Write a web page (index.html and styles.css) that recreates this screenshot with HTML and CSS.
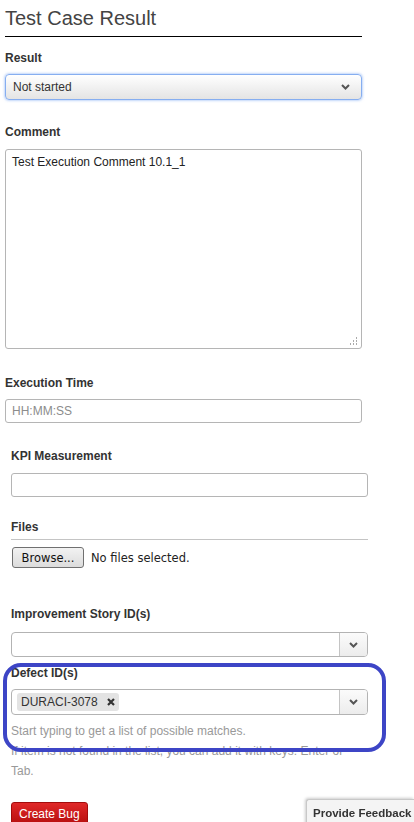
FILE: index.html
```html
<!DOCTYPE html>
<html lang="en">
<head>
<meta charset="utf-8">
<title>Test Case Result</title>
<link rel="stylesheet" href="styles.css">
</head>
<body>
<div class="panel">
  <h2 class="title">Test Case Result</h2>

  <div class="field field-result">
    <label class="label">Result</label>
    <div class="select">
      <span>Not started</span>
      <svg class="chev" width="9" height="6" viewBox="0 0 9 6"><path d="M1 1l3.5 3.5L8 1" fill="none" stroke="#555" stroke-width="2"/></svg>
    </div>
  </div>

  <div class="field field-comment">
    <label class="label">Comment</label>
    <div class="textarea">
      Test Execution Comment 10.1_1
      <svg class="grip" width="8" height="8" viewBox="0 0 8 8"><g fill="#aaa"><rect x="6" y="0" width="1" height="2"/><rect x="3" y="3" width="1" height="2"/><rect x="6" y="3" width="1" height="2"/><rect x="0" y="6" width="1" height="2"/><rect x="3" y="6" width="1" height="2"/><rect x="6" y="6" width="1" height="2"/></g></svg>
    </div>
  </div>

  <div class="field field-time">
    <label class="label">Execution Time</label>
    <div class="input placeholder">HH:MM:SS</div>
  </div>

  <div class="inner">
    <div class="field field-kpi">
      <label class="label">KPI Measurement</label>
      <div class="input"></div>
    </div>

    <div class="field field-files">
      <div class="label files-label">Files</div>
      <div class="file-row">
        <span class="browse">Browse...</span>
        <span class="file-status">No files selected.</span>
      </div>
    </div>

    <div class="field field-story">
      <label class="label">Improvement Story ID(s)</label>
      <div class="multi">
        <div class="multi-values"></div>
        <div class="multi-arrow"><svg width="9" height="6" viewBox="0 0 9 6"><path d="M1 1l3.5 3.5L8 1" fill="none" stroke="#555" stroke-width="2"/></svg></div>
      </div>
    </div>

    <div class="field field-defect">
      <div class="highlight"></div>
      <label class="label">Defect ID(s)</label>
      <div class="multi">
        <div class="multi-values">
          <span class="tag">DURACI-3078 <svg class="tag-x" width="8" height="8" viewBox="0 0 8 8"><path d="M1 1l6 6M7 1l-6 6" stroke="#333" stroke-width="2.2"/></svg></span>
        </div>
        <div class="multi-arrow"><svg width="9" height="6" viewBox="0 0 9 6"><path d="M1 1l3.5 3.5L8 1" fill="none" stroke="#555" stroke-width="2"/></svg></div>
      </div>
      <p class="help">Start typing to get a list of possible matches.<br>If item is not found in the list, you can add it with keys: Enter or Tab.</p>
    </div>

    <div class="actions">
      <span class="btn-bug">Create Bug</span>
    </div>
  </div>
</div>

<div class="feedback">Provide Feedback</div>
</body>
</html>
```

FILE: styles.css
```css
* { box-sizing: border-box; }

body {
  margin: 0;
  font-family: "Liberation Sans", Arial, sans-serif;
  font-size: 12px;
  color: #333;
  background: #fff;
}

.panel {
  padding-left: 5px;
  width: 362px;
}

.title {
  margin: 7px 0 0;
  font-size: 20px;
  line-height: 23px;
  font-weight: normal;
  color: #444;
  padding-bottom: 6px;
  border-bottom: 1px solid #000;
}

.label {
  display: block;
  font-weight: bold;
  line-height: 16px;
  margin-bottom: 9px;
  color: #333;
}

.field-result { margin-top: 13px; }
.field-result .label { margin-bottom: 8px; }

.select {
  height: 26px;
  border: 1px solid #86aef0;
  border-radius: 4px;
  box-shadow: 0 0 3px rgba(90, 145, 240, 0.75);
  background: linear-gradient(#ffffff, #e4e4e4);
  display: flex;
  align-items: center;
  justify-content: space-between;
  padding: 0 11px 0 7px;
  color: #333;
}

.chev { display: block; }

.field-comment { margin-top: 24px; }

.textarea {
  position: relative;
  height: 200px;
  border: 1px solid #b5b5b5;
  border-radius: 3px;
  padding: 5px 6px;
  color: #222;
  line-height: 14px;
}

.grip {
  position: absolute;
  right: 3px;
  bottom: 3px;
}

.field-time { margin-top: 26px; }
.field-time .label { margin-bottom: 8px; }

.input {
  height: 24px;
  border: 1px solid #b5b5b5;
  border-radius: 3px;
  padding: 0 6px;
  display: flex;
  align-items: center;
}

.placeholder { color: #8c8c8c; }

.inner {
  margin-left: 6px;
  width: 357px;
}

.field-kpi { margin-top: 25px; }

.field-files { margin-top: 22px; }

.files-label {
  padding-bottom: 4px;
  border-bottom: 1px solid #c4c4c4;
  margin-bottom: 7px;
}

.file-row {
  display: flex;
  align-items: center;
  gap: 7px;
  padding-left: 1px;
  font-family: "DejaVu Sans", Tahoma, sans-serif;
  font-size: 11.5px;
  color: #222;
}

.browse {
  width: 72px;
  height: 21px;
  display: flex;
  align-items: center;
  justify-content: center;
  border: 1px solid #707070;
  border-radius: 3px;
  background: linear-gradient(#f2f2f2, #dcdcdc);
  color: #111;
}

.field-story { margin-top: 38px; }
.field-story .label { margin-bottom: 10px; }

.multi {
  height: 25px;
  border: 1px solid #b3b3b3;
  border-radius: 4px;
  display: flex;
  background: #fff;
}

.multi-values {
  flex: 1;
  display: flex;
  align-items: center;
  padding-left: 5px;
}

.multi-arrow {
  width: 28px;
  border-left: 1px solid #c4c4c4;
  border-radius: 0 3px 3px 0;
  background: linear-gradient(#fbfbfb, #ececec);
  display: flex;
  align-items: center;
  justify-content: center;
}

.field-defect {
  position: relative;
  margin-top: 8px;
}
.field-defect .label { margin-bottom: 8px; }
.field-defect .multi { height: 26px; }

.tag {
  display: inline-flex;
  align-items: center;
  height: 18px;
  padding: 0 4px;
  gap: 9px;
  background: #e3e3e3;
  border-radius: 3px;
  color: #333;
}

.tag-x { display: block; flex: none; }

.help {
  margin: 6px 0 0;
  line-height: 20px;
  color: #999;
}

.highlight {
  position: absolute;
  left: -8px;
  top: -2px;
  width: 383px;
  height: 89px;
  border: 4px solid #3d45c6;
  border-radius: 18px;
  z-index: 2;
  pointer-events: none;
}

.actions { margin-top: 21px; }

.btn-bug {
  display: inline-flex;
  align-items: center;
  height: 23px;
  padding: 0 7px;
  white-space: nowrap;
  border: 1px solid #a30c0c;
  border-radius: 3px;
  background: linear-gradient(#e02828, #b70f0f);
  color: #fff;
}

.feedback {
  position: fixed;
  right: 0;
  top: 799px;
  width: 108px;
  height: 30px;
  padding: 6px 0 0 6px;
  background: #f4f4f4;
  border: 1px solid #c8c8c8;
  border-right: none;
  border-radius: 3px 0 0 0;
  box-shadow: -1px -1px 3px rgba(0, 0, 0, 0.2);
  font-weight: bold;
  font-size: 11.5px;
  line-height: 14px;
  white-space: nowrap;
  color: #333;
}
```
